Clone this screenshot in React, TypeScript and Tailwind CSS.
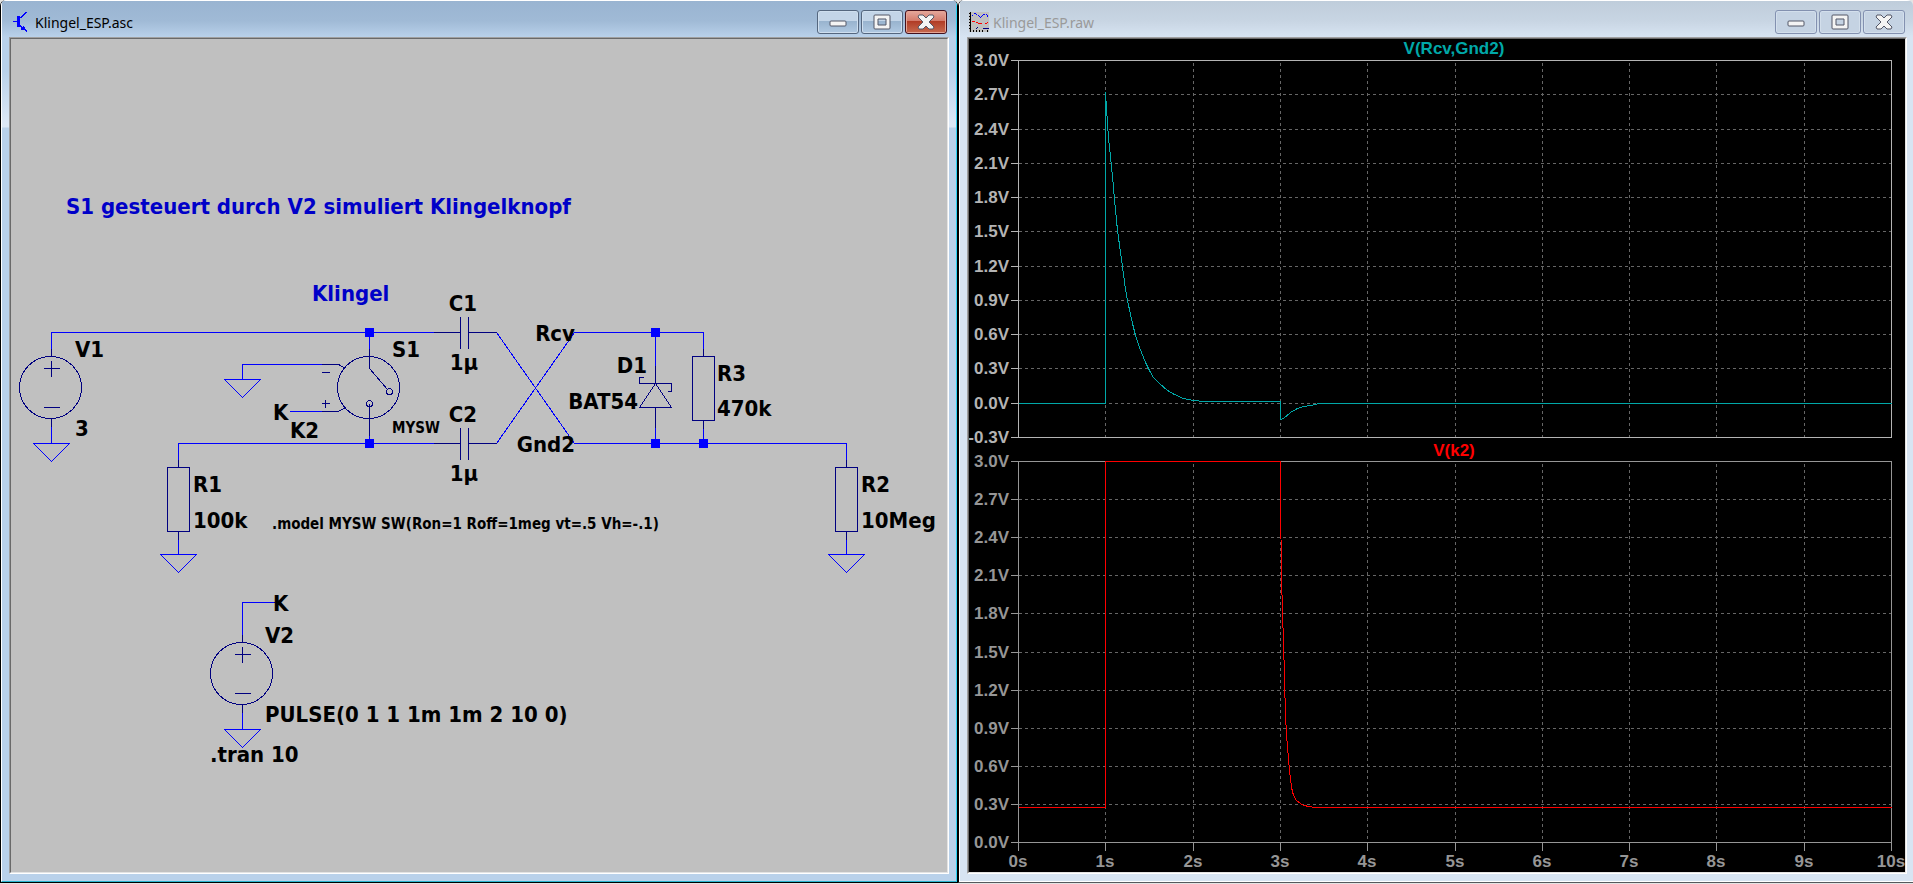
import React from "react";

const WIRE = "#0000ff";
const PART = "#000080";

// x runs 0..10s over both panes
const X0 = 49;
const X_STEP = 87.3;
const SECONDS = ["0s", "1s", "2s", "3s", "4s", "5s", "6s", "7s", "8s", "9s", "10s"];

const UPPER = {
  title: "V(Rcv,Gnd2)",
  titleY: 15,
  color: "#00a8a8",
  axis: "#b4b4b4",
  top: 21,
  bottom: 398,
  labels: ["3.0V", "2.7V", "2.4V", "2.1V", "1.8V", "1.5V", "1.2V", "0.9V", "0.6V", "0.3V", "0.0V", "-0.3V"],
  trace:
    "49,364 136,364 136,53 137,69 138,84 139,99 141,117 143,137 145,160 148,191 152,220 156,250 158,261 163,284 166,296 170,308 176,323 180,331 184,338 190,344 198,351 205,355 214,359 224,361 234,362 311,362 311,380 314,379 321,373 328,369 334,367 342,366 349,364 922,364",
};

const LOWER = {
  title: "V(k2)",
  titleY: 417,
  color: "#ff0000",
  axis: "#969696",
  top: 422,
  bottom: 803,
  labels: ["3.0V", "2.7V", "2.4V", "2.1V", "1.8V", "1.5V", "1.2V", "0.9V", "0.6V", "0.3V", "0.0V"],
  trace:
    "49,768 136,768 136,422 311,422 311,463 312,534 313,576 314,600 315,640 316,676 317,694 318,708 319,719 320,731 322,748 324,756 327,761 331,764 334,766 340,767 345,768 922,768",
};

type Pane = typeof UPPER;

function PlotPane({ pane }: { pane: Pane }) {
  const step = (pane.bottom - pane.top) / (pane.labels.length - 1);
  return (
    <g>
      <g transform="translate(0.5 0.5)" shapeRendering="crispEdges" fill="none">
        <g stroke="#666666" strokeDasharray="3 3">
          {SECONDS.slice(1, -1).map((s, i) => {
            const x = Math.round(X0 + X_STEP * (i + 1));
            return <line key={s} x1={x} x2={x} y1={pane.top + 2} y2={pane.bottom} />;
          })}
          {pane.labels.slice(1, -1).map((l, i) => {
            const y = Math.round(pane.top + step * (i + 1));
            return <line key={l} x1={X0} x2={922} y1={y} y2={y} />;
          })}
        </g>
        <g stroke={pane.axis}>
          <rect x={X0} y={pane.top} width={873} height={pane.bottom - pane.top} />
          {pane.labels.map((l, i) => {
            const y = Math.round(pane.top + step * i);
            return <line key={l} x1={X0 - 8} x2={X0} y1={y} y2={y} />;
          })}
        </g>
        <polyline points={pane.trace} stroke={pane.color} />
      </g>
      <g fill={pane.axis} textAnchor="end">
        {pane.labels.map((l, i) => (
          <text key={l} x={X0 - 9} y={Math.round(pane.top + step * i) + 6}>
            {l}
          </text>
        ))}
      </g>
      <text x={485} y={pane.titleY} textAnchor="middle" fill={pane.color}>
        {pane.title}
      </text>
    </g>
  );
}

function Plot() {
  return (
    <svg
      viewBox="0 0 936 833"
      preserveAspectRatio="xMinYMin meet"
      className="block h-full w-full bg-black font-['Liberation_Sans',Arial,sans-serif] text-[17px] font-bold"
    >
      <PlotPane pane={UPPER} />
      <PlotPane pane={LOWER} />
      <g fill={LOWER.axis} textAnchor="middle">
        {SECONDS.map((s, i) => {
          const x = Math.round(X0 + X_STEP * i);
          return (
            <g key={s}>
              <rect x={x} y={803} width={1} height={9} />
              <text x={x} y={828}>
                {s}
              </text>
            </g>
          );
        })}
      </g>
    </svg>
  );
}

function Ground({ x, y }: { x: number; y: number }) {
  return <path d={`M${x - 18} ${y}H${x + 18}L${x} ${y + 18}Z`} stroke={WIRE} />;
}

function Node({ x, y }: { x: number; y: number }) {
  return <rect x={x - 4} y={y - 4} width={8} height={8} fill={WIRE} stroke={WIRE} />;
}

function Source({ x, y }: { x: number; y: number }) {
  return (
    <g stroke={PART}>
      <circle cx={x - 1} cy={y + 31} r={31} />
      <path d={`M${x - 8} ${y + 12}h16M${x} ${y + 4}v16M${x - 8} ${y + 51}h16M${x} ${y - 8}v8M${x} ${y + 62}v8`} />
    </g>
  );
}

function Resistor({ x, y }: { x: number; y: number }) {
  return (
    <g stroke={PART}>
      <rect x={x - 11} y={y} width={22} height={64} />
      <path d={`M${x} ${y - 8}v8M${x} ${y + 64}v8`} />
    </g>
  );
}

function Capacitor({ x, y }: { x: number; y: number }) {
  return <path stroke={PART} d={`M${x} ${y}h27M${x + 27} ${y - 16}v32M${x + 35} ${y - 16}v32M${x + 35} ${y}h28`} />;
}

type Label = { t: string; x: number; y: number; anchor?: "middle" | "end" };

const LABELS: Label[] = [
  { t: "V1", x: 64, y: 318 },
  { t: "3", x: 64, y: 397 },
  { t: "K", x: 262, y: 381 },
  { t: "K2", x: 279, y: 399 },
  { t: "S1", x: 381, y: 318 },
  { t: "R1", x: 182, y: 453 },
  { t: "100k", x: 182, y: 489 },
  { t: "C1", x: 452, y: 272, anchor: "middle" },
  { t: "1µ", x: 453, y: 331, anchor: "middle" },
  { t: "C2", x: 452, y: 383, anchor: "middle" },
  { t: "1µ", x: 453, y: 442, anchor: "middle" },
  { t: "Rcv", x: 564, y: 302, anchor: "end" },
  { t: "Gnd2", x: 564, y: 413, anchor: "end" },
  { t: "D1", x: 636, y: 334, anchor: "end" },
  { t: "BAT54", x: 627, y: 370, anchor: "end" },
  { t: "R3", x: 706, y: 342 },
  { t: "470k", x: 706, y: 377 },
  { t: "R2", x: 850, y: 453 },
  { t: "10Meg", x: 850, y: 489 },
  { t: "K", x: 262, y: 572 },
  { t: "V2", x: 254, y: 604 },
  { t: "PULSE(0 1 1 1m 1m 2 10 0)", x: 254, y: 683 },
  { t: ".tran 10", x: 199, y: 723 },
];

function Schematic() {
  return (
    <svg
      viewBox="0 0 936 833"
      preserveAspectRatio="xMinYMin meet"
      className="block h-full w-full bg-[#c0c0c0] font-['DejaVu_Sans_Condensed','Noto_Sans',sans-serif] text-[22px] font-bold"
    >
      <g transform="translate(0.5 0.5)" shapeRendering="crispEdges" fill="none">
        {/* wires */}
        <g stroke={WIRE}>
          <path d="M40 317V293H422M40 379V404" />
          <path d="M358 293V317M358 379V404" />
          <path d="M310 325H231V340M278 372H310" />
          <path d="M167 428V404H422M167 492V515" />
          <path d="M485 293L563 404H835V428M485 404L563 293H692V317" />
          <path d="M644 293V326M644 380V404M692 380V404M835 492V515" />
          <path d="M263 563H231V603M231 665V690" />
        </g>
        <Ground x={40} y={404} />
        <Ground x={231} y={340} />
        <Ground x={167} y={515} />
        <Ground x={835} y={515} />
        <Ground x={231} y={690} />

        <Source x={40} y={317} />
        <Source x={231} y={603} />
        <Resistor x={167} y={428} />
        <Resistor x={692} y={317} />
        <Resistor x={835} y={428} />
        <Capacitor x={422} y={293} />
        <Capacitor x={422} y={404} />

        {/* voltage controlled switch */}
        <g stroke={PART}>
          <circle cx={357} cy={348} r={31} />
          <path d="M358 309V329L376 350M358 364V396" />
          <circle cx={378} cy={352} r={3} />
          <circle cx={358} cy={364} r={3} />
          <path d="M310 325H327L334 329M310 372H327L334 368" />
          <path d="M310 333h8M310 364h8M314 360v8" />
        </g>

        {/* schottky diode */}
        <path
          stroke={PART}
          d="M644 326V344M632 338H628V344H660V352H656M644 344L628 368H660ZM644 368V388"
        />

        <Node x={358} y={293} />
        <Node x={358} y={404} />
        <Node x={644} y={293} />
        <Node x={644} y={404} />
        <Node x={692} y={404} />
      </g>

      <g fill="#0000c8">
        <text x={55} y={175}>
          S1 gesteuert durch V2 simuliert Klingelknopf
        </text>
        <text x={301} y={262}>
          Klingel
        </text>
      </g>
      <g fill="#000000">
        {LABELS.map((l, i) => (
          <text key={i} x={l.x} y={l.y} textAnchor={l.anchor}>
            {l.t}
          </text>
        ))}
        <g className="text-[15px]">
          <text x={381} y={394}>
            MYSW
          </text>
          <text x={261} y={490}>
            .model MYSW SW(Ron=1 Roff=1meg vt=.5 Vh=-.1)
          </text>
        </g>
      </g>
    </svg>
  );
}

const GLYPHS = {
  Minimize: <rect x="1" y="7" width="16" height="5" rx="1" fill="#f4f4f4" stroke="#535666" />,
  Maximize: (
    <path
      d="M2 1H16Q17 1 17 2V14Q17 15 16 15H2Q1 15 1 14V2Q1 1 2 1ZM5 5V11H13V5Z"
      fill="#f4f4f4"
      fillRule="evenodd"
      stroke="#535666"
    />
  ),
  Close: (
    <path
      d="M2 1H6L9 4L12 1H16L17 3L12 8L17 13L16 15H12L9 12L6 15H2L1 13L6 8L1 3Z"
      fill="#f4f4f4"
      stroke="#535666"
      strokeLinejoin="round"
    />
  ),
};

function CaptionButton({ name, active }: { name: keyof typeof GLYPHS; active: boolean }) {
  const look = !active
    ? "border-[#8391b0] bg-[#c5d3e3] shadow-[inset_0_0_0_1px_#d3dfec]"
    : name === "Close"
      ? "border-[#43101c] bg-linear-to-b from-[#e5a79d] from-0% via-[#d37a6a] via-45% to-[#c05b45] shadow-[inset_0_0_0_1px_#e5a594]"
      : "border-[#55677f] bg-linear-to-b from-[#c3d5e8] from-45% via-[#98b3ce] via-46% to-[#b0c9e2] shadow-[inset_0_0_0_1px_#cfdfef]";
  return (
    <button
      type="button"
      aria-label={name}
      className={`relative flex h-6 w-[42px] items-center justify-center overflow-hidden rounded-[3px] border ${look}`}
    >
      {active && name === "Close" && (
        <span className="absolute inset-x-px bottom-px h-[11px] bg-linear-to-b from-[#b03a24] to-[#c4664c]" />
      )}
      <svg width="18" height="16" viewBox="0 0 18 16" className="relative">
        {GLYPHS[name]}
      </svg>
    </button>
  );
}

function SchematicIcon() {
  return (
    <svg width="14" height="20" viewBox="0 0 14 20" shapeRendering="crispEdges" fill={WIRE}>
      <rect x="0" y="9" width="4" height="1" />
      <rect x="4" y="4" width="3" height="11" />
      <path d="M7 5L12 0H14L8 6H7ZM7 13L10 15V14L12 15V17L14 19L13 20L11 18H8V16L7 15Z" />
    </svg>
  );
}

function PlotIcon() {
  return (
    <svg width="20" height="20" viewBox="0 0 20 20" shapeRendering="crispEdges">
      <rect width="20" height="20" fill="#c0c0c0" />
      <path
        d="M1 0h1v20h-1zM0 1h1v1h-1zM0 4h1v1h-1zM0 7h1v1h-1zM0 10h1v1h-1zM0 13h1v1h-1zM0 16h1v1h-1zM4 18h1v2h-1zM7 18h1v2h-1zM10 18h1v2h-1zM13 18h1v2h-1zM18 18h1v2h-1z"
        fill="#000"
      />
      <path
        d="M3 3h1v1h-1zM5 1h2v1h-2zM7 2h1v1h-1zM9 3h1v1h-1zM10 4h1v1h-1zM11 5h1v1h-1zM12 4h1v1h-1zM13 3h1v1h-1zM14 2h2v1h-2zM17 2h1v1h-1zM18 3h1v2h-1z"
        fill="#0000ff"
      />
      <path d="M3 9h3v1h-3zM7 10h2v1h-2zM9 11h4v1h-4zM16 11h2v1h-2zM18 10h1v1h-1z" fill="#ff0000" />
      <path d="M7 16h1v1h-1zM8 15h1v1h-1zM14 16h6v1h-6z" fill="#000080" />
    </svg>
  );
}

function ChildWindow({ title, icon, active, children }: {
  title: string; icon: React.ReactNode; active: boolean; children: React.ReactNode;
}) {
  return (
    <section
      className={`flex min-h-0 min-w-0 flex-col overflow-hidden rounded-t-md border-l border-b ${
        active ? "border-r border-black" : "border-l-black border-b-[#55585c]"
      }`}
    >
      <div
        className={`flex min-h-0 flex-1 flex-col border-t border-l border-b border-t-white border-l-white pb-[7px] pl-[7px] ${
          active
            ? "border-r border-r-[#2ad4f5] border-b-[#2ab4cf] bg-[#b9d1ea] bg-[linear-gradient(#99b4d1_0px,#a0bad6_20px,#b9d1ea_36px,#b9d1ea_70px,#dce8f6_122px,#dce8f6_126px,#b9d1ea_127px)] pr-[7px]"
            : "border-b-white bg-[#d7e4f2] bg-[linear-gradient(#bfcddb_0px,#c8d5e3_20px,#d7e4f2_36px)] pr-[6px]"
        }`}
      >
        <header className="flex h-9 flex-none items-start justify-between pr-0.5">
          <div className={`flex items-start pt-[11px] ${active ? "gap-2 pl-1" : "gap-1 pl-0.5"}`}>
            {icon}
            <h2
              className={`font-['Noto_Sans','Open_Sans',sans-serif] text-[14px] leading-[22px] ${
                active ? "text-black" : "text-[#9a9a9a]"
              }`}
            >
              {title}
            </h2>
          </div>
          <div className="flex gap-0.5 pt-[9px]">
            <CaptionButton name="Minimize" active={active} />
            <CaptionButton name="Maximize" active={active} />
            <CaptionButton name="Close" active={active} />
          </div>
        </header>
        <div className="flex min-h-0 flex-1 border border-t-[#a0a0a0] border-l-[#a0a0a0] border-r-white border-b-white">
          <div className="min-h-0 min-w-0 flex-1 border border-t-[#696969] border-l-[#696969] border-r-[#e3e3e3] border-b-[#e3e3e3]">
            {children}
          </div>
        </div>
      </div>
    </section>
  );
}

export default function App() {
  return (
    <main className="grid h-screen grid-cols-[958fr_955fr] grid-rows-1 overflow-hidden bg-[#e4e4e4] pb-px">
      <ChildWindow title="Klingel_ESP.asc" icon={<SchematicIcon />} active>
        <Schematic />
      </ChildWindow>
      <ChildWindow title="Klingel_ESP.raw" icon={<PlotIcon />} active={false}>
        <Plot />
      </ChildWindow>
    </main>
  );
}
